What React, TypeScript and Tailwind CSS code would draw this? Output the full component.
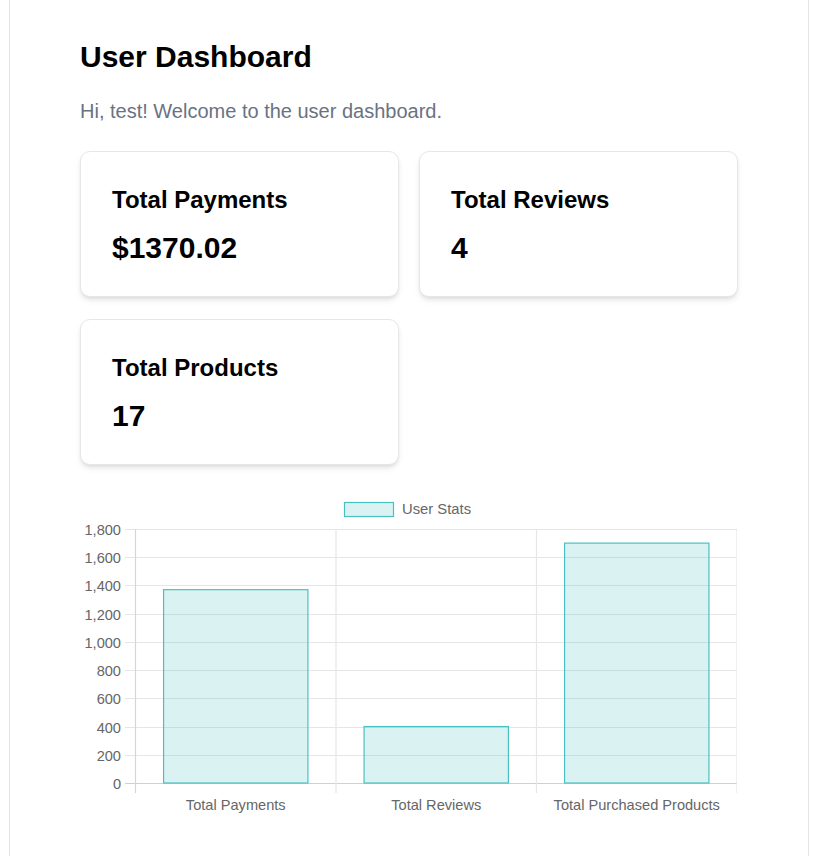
const stats = [
  { label: 'Total Payments', value: '$1370.02' },
  { label: 'Total Reviews', value: '4' },
  { label: 'Total Products', value: '17' },
];

const bars = [
  { label: 'Total Payments', value: 1370.02 },
  { label: 'Total Reviews', value: 400 },
  { label: 'Total Purchased Products', value: 1700 },
];

const TOP = 529;
const BOTTOM = 783;
const LEFT = 135.5;
const RIGHT = 737;
const MAX = 1800;

function yFor(v: number) {
  return BOTTOM - (v / MAX) * (BOTTOM - TOP);
}

function StatsChart() {
  const ticks = [1800, 1600, 1400, 1200, 1000, 800, 600, 400, 200, 0];
  const colW = (RIGHT - LEFT) / bars.length;
  const barW = colW * 0.72;
  const font = "'Liberation Sans', Arial, sans-serif";

  return (
    <svg viewBox="80 490 657 330" width={657} height={330} className="block">
      {/* legend */}
      <rect x={344.5} y={502.5} width={49} height={14} fill="rgba(75,192,192,0.2)" stroke="rgb(75,192,192)" strokeWidth={1.2} />
      <text x={402} y={514} fontSize={14.8} fill="#666" fontFamily={font}>
        User Stats
      </text>

      {/* horizontal grid */}
      {ticks.map((t) => {
        const y = Math.round(yFor(t)) + 0.5;
        return (
          <g key={t}>
            <line x1={125} x2={RIGHT} y1={y} y2={y} stroke={t === 0 ? '#d0d0d0' : '#e6e6e6'} strokeWidth={1.2} />
            <text x={121} y={y + 5} textAnchor="end" fontSize={14.6} fill="#666" fontFamily={font}>
              {t.toLocaleString('en-US')}
            </text>
          </g>
        );
      })}

      {/* vertical grid */}
      {[0, 1, 2, 3].map((i) => {
        const x = LEFT + i * colW;
        return (
          <line
            key={i}
            x1={x}
            x2={x}
            y1={TOP}
            y2={793}
            stroke={i === 0 ? '#d6d6d6' : '#e6e6e6'}
            strokeWidth={1.2}
          />
        );
      })}

      {/* bars */}
      {bars.map((b, i) => {
        const cx = LEFT + colW * (i + 0.5);
        const top = yFor(b.value);
        return (
          <g key={b.label}>
            <rect
              x={cx - barW / 2}
              y={top}
              width={barW}
              height={BOTTOM - top}
              fill="rgba(75,192,192,0.2)"
              stroke="rgb(75,192,192)"
              strokeWidth={1.2}
            />
            <text x={cx} y={809.5} textAnchor="middle" fontSize={14.6} fill="#666" fontFamily={font}>
              {b.label}
            </text>
          </g>
        );
      })}
    </svg>
  );
}

export default function App() {
  return (
    <div className="min-h-screen bg-white font-['Liberation_Sans',Arial,sans-serif]">
      <div className="ml-[9px] min-h-screen w-[800px] border-x border-[#e5e5e5] px-[70px] pt-[39px]">
        <h1 className="text-3xl font-bold text-black">User Dashboard</h1>
        <p className="mt-[22px] text-xl leading-7 text-gray-500">Hi, test! Welcome to the user dashboard.</p>

        <div className="mt-[26px] grid grid-cols-2 gap-x-5 gap-y-[22px]">
          {stats.map((s) => (
            <div key={s.label} className="rounded-[10px] border border-gray-200 bg-white pl-[31px] pr-8 pt-8 pb-[30px] shadow-md">
              <h3 className="text-2xl font-bold text-black">{s.label}</h3>
              <div className="mt-[14px] text-3xl font-bold text-black">{s.value}</div>
            </div>
          ))}
        </div>

        <div className="mt-[25px]">
          <StatsChart />
        </div>
      </div>
    </div>
  );
}
